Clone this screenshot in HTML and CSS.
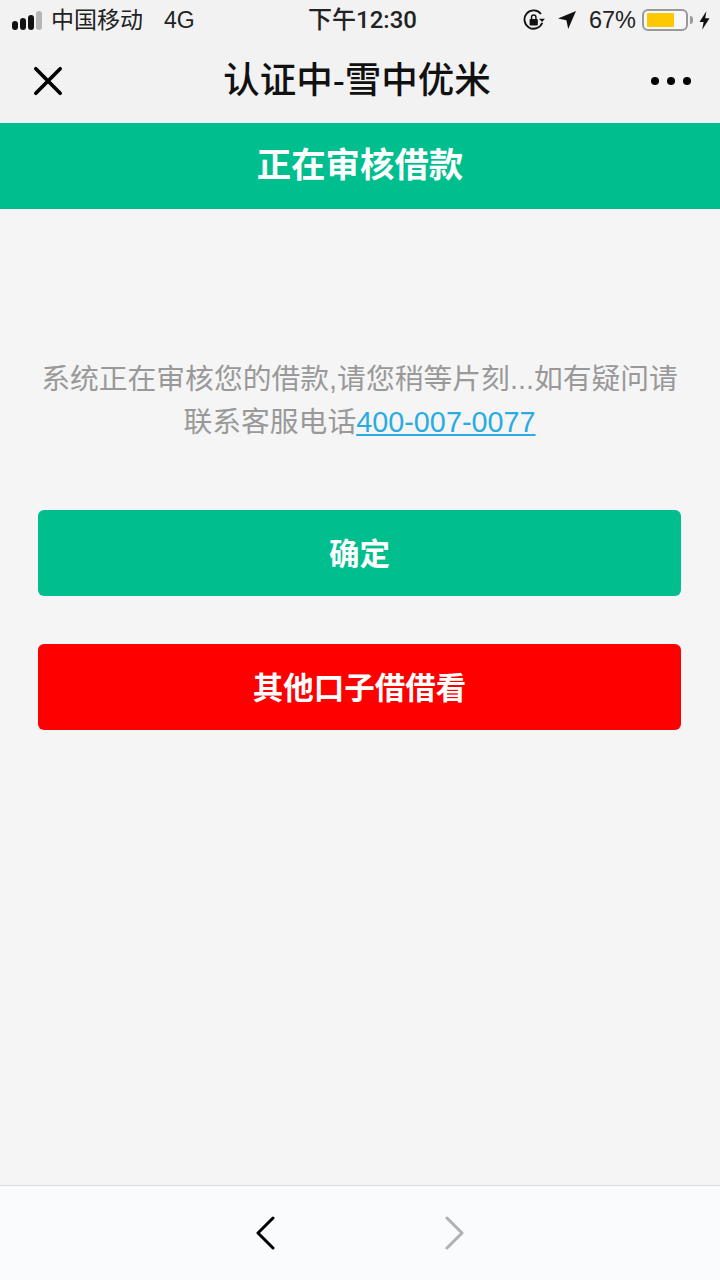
FILE: index.html
```html
<!DOCTYPE html>
<html lang="zh-CN">
<head>
    <meta charset="UTF-8">
    <meta name="viewport" content="width=device-width, initial-scale=1.0">
    <title>认证中-雪中优米</title>
    <link rel="stylesheet" href="styles.css">
</head>
<body>
    <div class="top-chrome">
        <div class="status-bar">
            <div class="status-left">
                <div class="signal">
                    <span class="dot s1"></span>
                    <span class="dot s2"></span>
                    <span class="dot s3"></span>
                    <span class="dot s4"></span>
                </div>
                <span class="carrier">中国移动</span>
                <span class="network">4G</span>
            </div>
            <div class="status-time">下午12:30</div>
            <div class="status-right">
                <svg class="icon-lock" width="22" height="22" viewBox="0 0 24 24">
                    <path d="M21 15A10 10 0 1 1 19.6 5.5" fill="none" stroke="#111" stroke-width="2"/>
                    <path d="M17.5 10.5h6.5l-3.2 3.6z" fill="#111"/>
                    <rect x="7.2" y="11" width="9" height="7" rx="1" fill="#111"/>
                    <path d="M9.3 11.5V9a2.4 2.4 0 0 1 4.8 0v2.5" fill="none" stroke="#111" stroke-width="1.6"/>
                </svg>
                <svg class="icon-loc" width="18" height="18" viewBox="0 0 18 18">
                    <path d="M18 0 0 7.6l8.4 1.6L10.2 18z" fill="#111"/>
                </svg>
                <span class="percent">67%</span>
                <div class="battery">
                    <div class="battery-fill"></div>
                </div>
                <span class="battery-cap"></span>
                <svg class="icon-bolt" width="11" height="19" viewBox="0 0 12 20">
                    <path d="M8 0 .5 11.5H5L3.5 20l8-12.5H6.8z" fill="#111"/>
                </svg>
            </div>
        </div>
        <div class="nav-bar">
            <svg class="icon-close" viewBox="0 0 32 32">
                <path d="M3 3 29 29M29 3 3 29" stroke="#000" stroke-width="3.9" stroke-linecap="round"/>
            </svg>
            <div class="nav-title">认证中-雪中优米</div>
            <div class="more">
                <span></span><span></span><span></span>
            </div>
        </div>
    </div>

    <div class="banner">正在审核借款</div>

    <div class="content">
        <p class="message">系统正在审核您的借款,请您稍等片刻...如有疑问请联系客服电话<a href="#">400-007-0077</a></p>
        <button class="btn btn-green">确定</button>
        <button class="btn btn-red">其他口子借借看</button>
    </div>

    <div class="bottom-bar">
        <svg width="20" height="34" viewBox="0 0 20 34">
            <path d="M18 2 3 17l15 15" fill="none" stroke="#000" stroke-width="3" stroke-linecap="round" stroke-linejoin="round"/>
        </svg>
        <svg width="20" height="34" viewBox="0 0 20 34">
            <path d="M2 2l15 15L2 32" fill="none" stroke="#b0b0b0" stroke-width="3" stroke-linecap="round" stroke-linejoin="round"/>
        </svg>
    </div>
</body>
</html>
```

FILE: styles.css
```css
* {
    box-sizing: border-box;
}

html, body {
    margin: 0;
    padding: 0;
}

body {
    width: 720px;
    height: 1280px;
    display: flex;
    flex-direction: column;
    overflow: hidden;
    font-family: "Liberation Sans", "Noto Sans CJK SC", sans-serif;
    background-color: #f5f5f5;
}

.top-chrome {
    height: 123px;
    background-color: #f2f2f2;
}

.status-bar {
    height: 40px;
    padding: 0 10px 0 12px;
    display: grid;
    grid-template-columns: 1fr auto 1fr;
    align-items: center;
    color: #222;
}

.status-left {
    display: flex;
    align-items: center;
}

.signal {
    display: flex;
    align-items: flex-end;
    gap: 2px;
    width: 31px;
    height: 19px;
    margin-right: 8px;
}

.dot {
    width: 6px;
    border-radius: 3px;
    background-color: #111;
}

.s1 { height: 9px; }
.s2 { height: 12px; }
.s3 { height: 15px; }
.s4 { height: 19px; background-color: #b5b5b5; }

.carrier {
    font-size: 23px;
    line-height: 30px;
}

.network {
    font-size: 23px;
    margin-left: 21px;
}

.status-time {
    font-family: Roboto, "Noto Sans CJK SC", sans-serif;
    font-size: 24px;
    font-weight: 500;
    line-height: 30px;
    padding-bottom: 1px;
    margin-left: 3px;
}

.status-right {
    display: flex;
    align-items: center;
    justify-content: flex-end;
}

.icon-lock {
    margin-right: 13px;
}

.icon-loc {
    margin-right: 13px;
}

.percent {
    font-size: 23.5px;
    margin-right: 6px;
}

.battery {
    width: 46px;
    height: 22px;
    padding: 2px 3px;
    border: 2px solid #999;
    border-radius: 6px;
    background-color: #f8f8f8;
}

.battery-fill {
    width: 27px;
    height: 100%;
    background-color: #fdc800;
    border-radius: 1px;
}

.battery-cap {
    width: 3px;
    height: 8px;
    margin-left: 2px;
    margin-right: 6px;
    background-color: #999;
    border-radius: 0 3px 3px 0;
}

.nav-bar {
    height: 83px;
    padding: 0 29px 2px 33px;
    display: flex;
    align-items: center;
    justify-content: space-between;
}

.icon-close {
    width: 30px;
    height: 30px;
}

.nav-title {
    font-size: 36.5px;
    font-weight: 500;
    line-height: 44px;
    color: #111;
}

.more {
    display: flex;
    gap: 8px;
}

.more span {
    width: 8px;
    height: 8px;
    border-radius: 50%;
    background-color: #000;
}

.banner {
    height: 86px;
    line-height: 84px;
    text-align: center;
    font-size: 34.4px;
    font-weight: 700;
    color: #fff;
    background-color: #00be8d;
}

.content {
    flex: 1;
    padding: 149px 39px 0 38px;
}

.message {
    margin: 0 0 66px;
    font-size: 28.8px;
    line-height: 43px;
    text-align: center;
    color: #999;
}

.message a {
    color: #2aace2;
}

.btn {
    display: block;
    width: 100%;
    height: 86px;
    margin-bottom: 48px;
    padding-bottom: 4px;
    border: none;
    border-radius: 6px;
    font-family: inherit;
    font-size: 30.5px;
    font-weight: 700;
    color: #fff;
}

.btn-green {
    background-color: #00be8d;
}

.btn-red {
    background-color: #ff0000;
}

.bottom-bar {
    height: 95px;
    display: flex;
    align-items: center;
    justify-content: center;
    gap: 170px;
    background-color: #fafbfd;
    border-top: 1px solid #dcdcdc;
}
```
